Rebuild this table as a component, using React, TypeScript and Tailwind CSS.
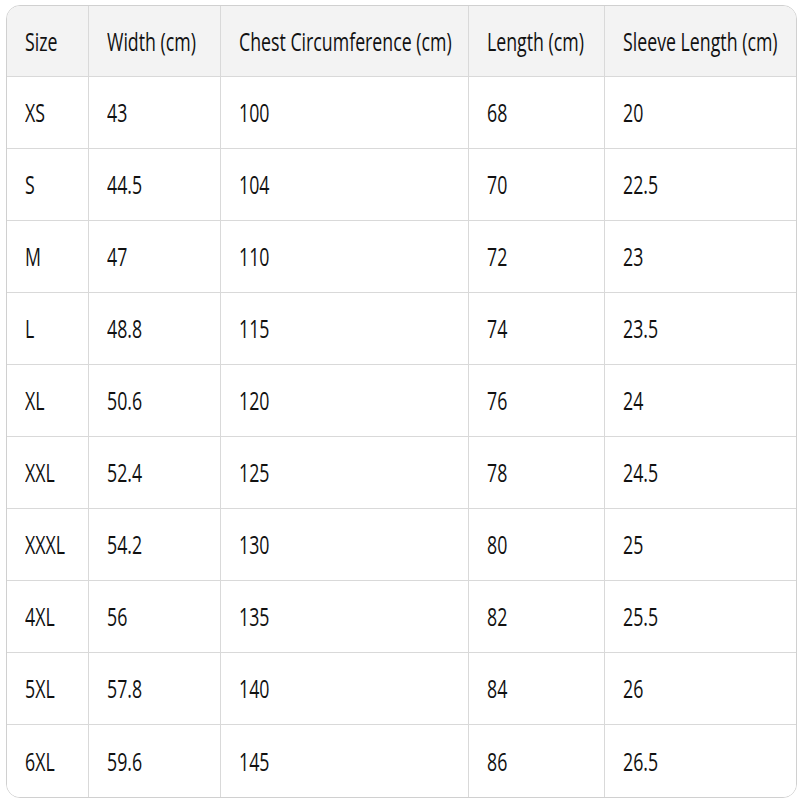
const headers = ["Size", "Width (cm)", "Chest Circumference (cm)", "Length (cm)", "Sleeve Length (cm)"];

const rows = [
  ["XS", "43", "100", "68", "20"],
  ["S", "44.5", "104", "70", "22.5"],
  ["M", "47", "110", "72", "23"],
  ["L", "48.8", "115", "74", "23.5"],
  ["XL", "50.6", "120", "76", "24"],
  ["XXL", "52.4", "125", "78", "24.5"],
  ["XXXL", "54.2", "130", "80", "25"],
  ["4XL", "56", "135", "82", "25.5"],
  ["5XL", "57.8", "140", "84", "26"],
  ["6XL", "59.6", "145", "86", "26.5"],
];

function Cell({ children, last, bottom, head }: { children: React.ReactNode; last: boolean; bottom: boolean; head?: boolean }) {
  return (
    <div
      className={
        "flex items-center pl-[18px] border-[#d9d9d9] " +
        (last ? "" : "border-r ") +
        (bottom ? "" : "border-b ") +
        (head ? "h-[71px] bg-[#f3f3f3]" : "h-[72px] bg-white")
      }
    >
      <span
        className={
          "inline-block origin-left scale-x-[0.71] whitespace-nowrap text-[25px] leading-none text-[#111] " +
          (head ? "font-medium" : "font-normal")
        }
      >
        {children}
      </span>
    </div>
  );
}

export default function App() {
  return (
    <div className="h-[800px] w-[800px] bg-white pl-[6px] pt-[5px] font-['Open_Sans',sans-serif]">
      <div className="grid w-[791px] grid-cols-[82px_132px_248px_136px_1fr] overflow-hidden rounded-[14px] border border-[#d0d0d0]">
        {headers.map((h, i) => (
          <Cell key={h} head last={i === 4} bottom={false}>
            {h}
          </Cell>
        ))}
        {rows.map((r, ri) =>
          r.map((v, ci) => (
            <Cell key={ri + "-" + ci} last={ci === 4} bottom={ri === rows.length - 1}>
              {v}
            </Cell>
          ))
        )}
      </div>
    </div>
  );
}
